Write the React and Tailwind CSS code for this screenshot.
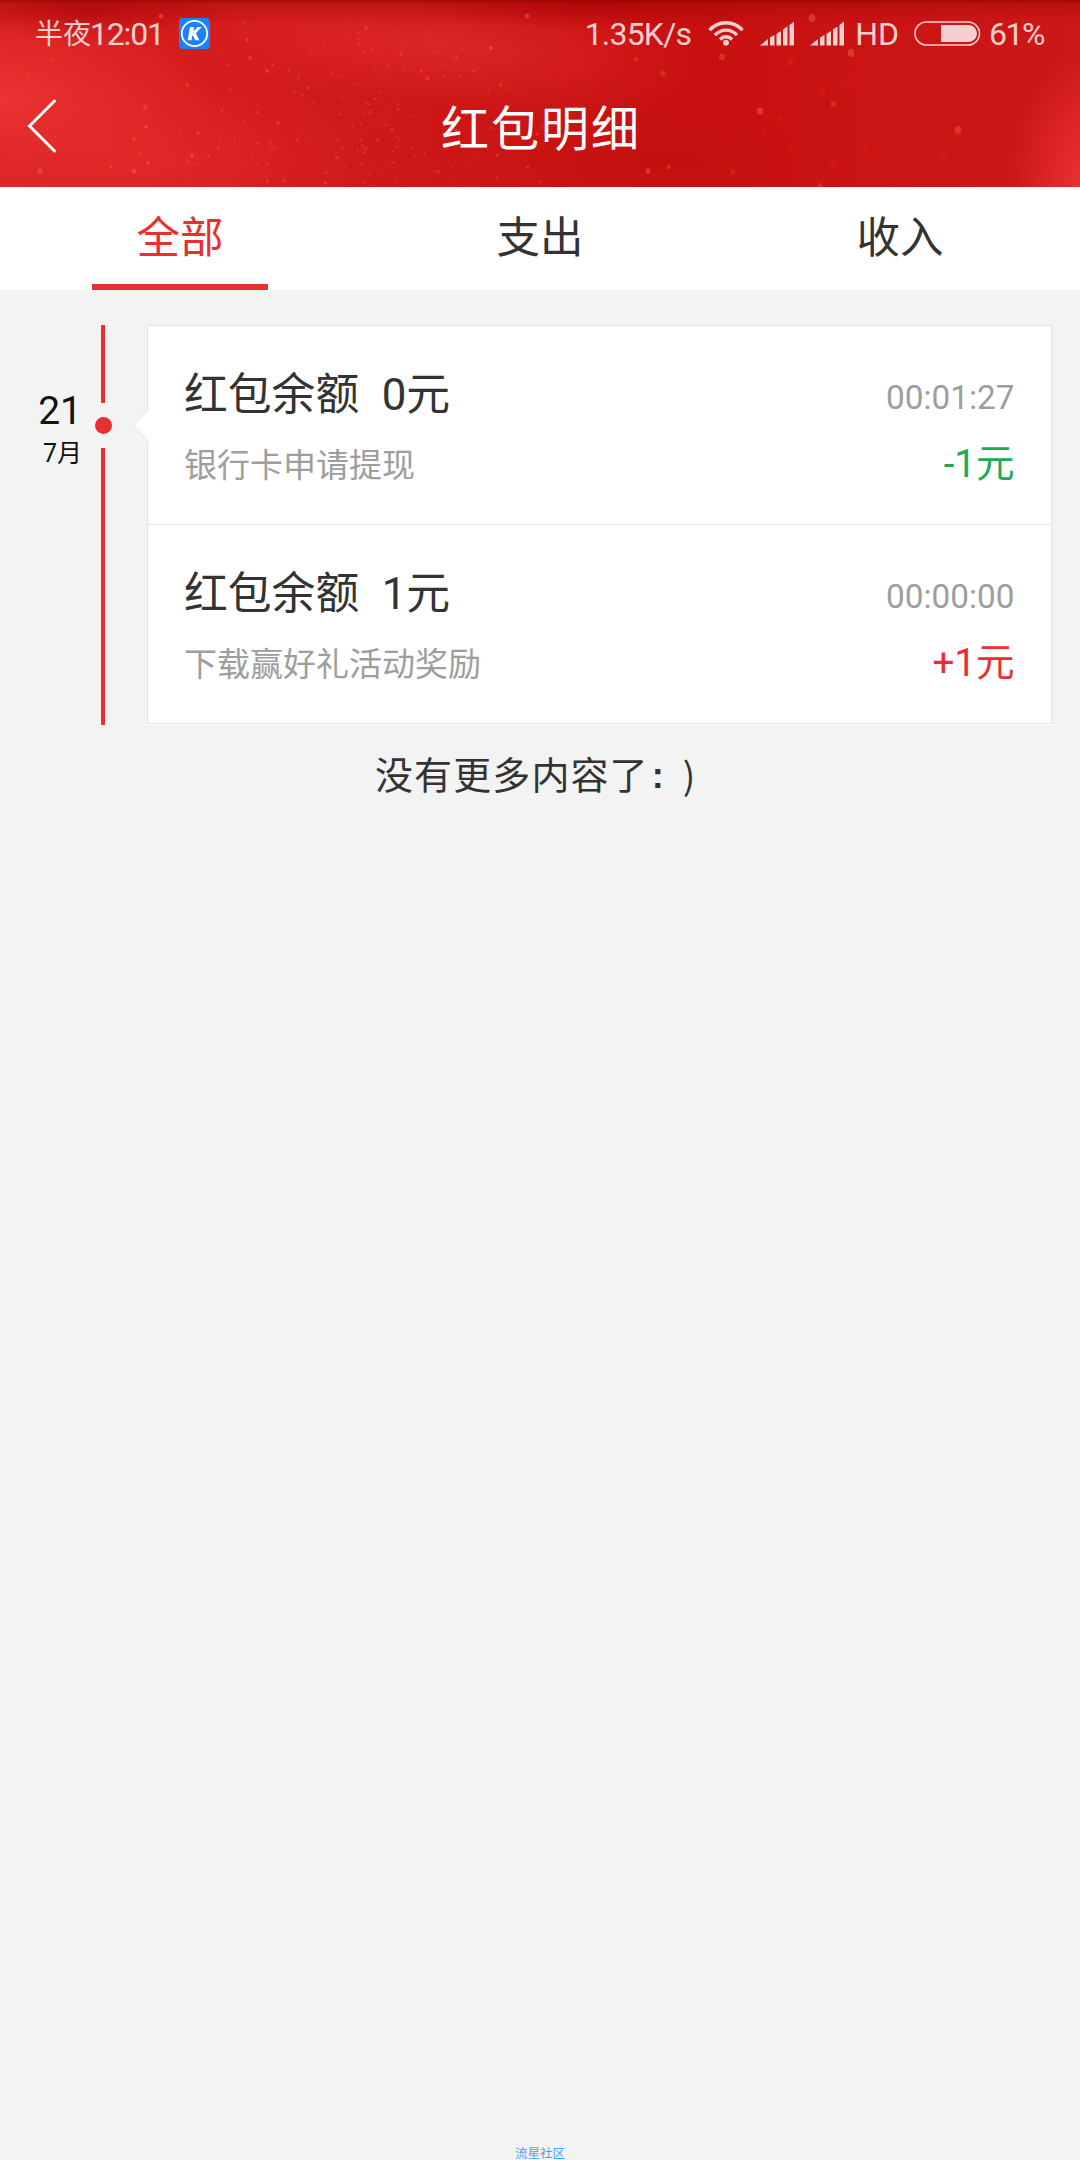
import clsx from "clsx";

const tabs = [
    { id: "all", label: "全部" },
    { id: "out", label: "支出" },
    { id: "in", label: "收入" }
];

const records = [
    { id: 1, balance: "0", time: "00:01:27", desc: "银行卡申请提现", amount: "-1元", income: false },
    { id: 2, balance: "1", time: "00:00:00", desc: "下载赢好礼活动奖励", amount: "+1元", income: true }
];

// larger, brighter sparks: x, y, radius, color
const sparks = [
    [161, 16, 2.5, "#f08080"], [527, 16, 2.5, "#f08080"], [812, 18, 4, "#e8705c"], [851, 53, 4, "#ea7a50"],
    [722, 57, 3.5, "#f0642c"], [760, 111, 3.5, "#ef7a5c"], [958, 130, 4, "#f0643c"], [833, 104, 3, "#ec4a1e"],
    [790, 62, 4, "#e42a18"], [663, 73, 3, "#ee5a24"], [636, 59, 2.5, "#ee5a24"], [40, 171, 3, "#ef6464"],
    [145, 107, 2.5, "#ef6464"], [146, 127, 2, "#e88060"], [192, 155, 2, "#f07070"], [134, 171, 2.5, "#f07070"],
    [111, 167, 2, "#f06a20"], [140, 153, 2, "#f06a20"], [134, 139, 2, "#f06a20"], [187, 85, 2, "#f46a30"],
    [52, 59, 2.5, "#f0441e"], [27, 73, 2, "#f0541e"], [648, 171, 3, "#e86464"], [669, 167, 2.5, "#e8541e"],
    [247, 40, 2, "#f06464"], [250, 58, 2, "#f06464"], [267, 71, 2, "#f06464"], [198, 133, 2, "#ee5a5a"],
    [491, 48, 2, "#f08080"], [501, 85, 2, "#f0601e"], [366, 28, 2, "#ee5a5a"], [148, 163, 2, "#f07070"],
    [401, 54, 2, "#ee5a5a"], [421, 71, 2, "#ee5a5a"], [428, 78, 2, "#ee5a5a"], [497, 155, 2, "#ee5a5a"],
    [822, 91, 4, "#dc2018"], [866, 146, 5, "#dc1c14"], [780, 118, 4, "#dc1c14"], [833, 167, 5, "#dc1c14"],
    [790, 148, 4, "#dc1c14"], [850, 81, 4, "#dc1c14"], [820, 186, 3, "#f0501e"], [943, 155, 4, "#dc2018"],
    [733, 172, 3, "#e03818"], [764, 132, 3, "#dc1c14"], [912, 96, 4, "#d81c18"]
];

// small seeded generator so the dust is the same on every render
function makeDust(count) {
    let seed = 20170721;
    const next = () => {
        seed = (seed * 16807) % 2147483647;
        return seed / 2147483647;
    };
    return Array.from({ length: count }, () => ({
        x: 170 + (next() + next()) * 190,
        y: 10 + Math.sqrt(next()) * 176,
        r: 0.8 + next() * 0.8,
        o: 0.12 + next() * 0.25
    }));
}

const dust = makeDust(200);

function HeaderBackdrop() {
    return (
        <svg className="absolute inset-0 -z-10 h-full w-full" viewBox="0 0 1080 187" preserveAspectRatio="none">
            <defs>
                <linearGradient id="base" x1="0" x2="1" y1="0" y2="0">
                    <stop offset="0" stopColor="#dc2424" />
                    <stop offset="0.2" stopColor="#d41c1c" />
                    <stop offset="0.45" stopColor="#cc1616" />
                    <stop offset="0.65" stopColor="#c81010" />
                    <stop offset="1" stopColor="#ce1818" />
                </linearGradient>
                <radialGradient id="glow">
                    <stop offset="0" stopColor="#f03838" />
                    <stop offset="0.5" stopColor="#ea3030" stopOpacity="0.6" />
                    <stop offset="1" stopColor="#e62c2c" stopOpacity="0" />
                </radialGradient>
                <radialGradient id="shade">
                    <stop offset="0" stopColor="#b80808" stopOpacity="0.75" />
                    <stop offset="1" stopColor="#c00c0c" stopOpacity="0" />
                </radialGradient>
                <linearGradient id="top" x1="0" x2="0" y1="0" y2="1">
                    <stop offset="0" stopColor="#800000" stopOpacity="0.6" />
                    <stop offset="0.15" stopColor="#900000" stopOpacity="0.3" />
                    <stop offset="1" stopColor="#a00000" stopOpacity="0" />
                </linearGradient>
            </defs>
            <rect width="1080" height="187" fill="url(#base)" />
            <ellipse cx="0" cy="100" rx="220" ry="90" fill="url(#glow)" opacity="0.8" />
            <ellipse cx="150" cy="160" rx="220" ry="90" fill="url(#glow)" opacity="0.4" />
            <ellipse cx="440" cy="45" rx="270" ry="62" fill="url(#glow)" opacity="0.45" transform="rotate(5 440 45)" />
            <ellipse cx="1095" cy="190" rx="85" ry="140" fill="url(#glow)" />
            <ellipse cx="90" cy="10" rx="150" ry="32" fill="url(#shade)" />
            <ellipse cx="600" cy="4" rx="190" ry="26" fill="url(#shade)" />
            <ellipse cx="650" cy="160" rx="190" ry="60" fill="url(#shade)" opacity="0.3" />
            <rect width="1080" height="26" fill="url(#top)" />
            {dust.map((d, i) => (
                <circle key={i} cx={d.x} cy={d.y} r={d.r} fill="#ff6a5a" opacity={d.o} />
            ))}
            {sparks.map(([x, y, r, color], i) => (
                <ellipse key={i} cx={x} cy={y} rx={r * 0.85} ry={r} fill={color} opacity="0.4" />
            ))}
        </svg>
    );
}

function AppBadge() {
    return (
        <svg className="ml-[15px] h-[31px] w-[31px]" viewBox="0 0 31 31">
            <rect width="31" height="31" rx="4" fill="#1a82ff" />
            <circle cx="15.5" cy="15.5" r="12.7" fill="none" stroke="#fff" strokeWidth="1.8" />
            <path d="M11 9h4.200l-.8 4.500L18.500 9h4.200l-5.700 6.200 3.300 7h-4.200l-2-4.900-.9 1-.7 3.900H8.700z" fill="#fff" />
        </svg>
    );
}

function WifiIcon() {
    return (
        <svg className="ml-[17px] h-[26px] w-[36px]" viewBox="0 0 36 26" fill="none" stroke="#f6cfcf" strokeWidth="3.400">
            <path d="M1.500 10.200C10.500.2 25.500.2 34.500 10.200" />
            <path d="M7 15.200c6-6.800 16-6.800 22 0" />
            <path d="M12 19.500c3.500-3.600 8.500-3.600 12 0" />
            <circle cx="18" cy="22.700" r="2.900" fill="#f6cfcf" stroke="none" />
        </svg>
    );
}

function SignalIcon() {
    return (
        <svg className="ml-[16px] h-[25px] w-[34px]" viewBox="0 0 34 25" fill="#f6cfcf">
            <path d="M0 24.500L8 18v6.500zM10 16.500l4.500-2.600v10.600H10zM16.500 13l4.500-3v14.500h-4.500zM23 8.500l4.500-3v19H23zM29.500 4L34 .5v24h-4.500z" />
        </svg>
    );
}

function BatteryIcon() {
    return (
        <svg className="ml-[15px] h-[25px] w-[67px]" viewBox="0 0 67 25">
            <rect x="1" y="1" width="64.500" height="23" rx="11.500" fill="none" stroke="#f6cfcf" strokeWidth="1.600" />
            <path d="M27 4h27.500a8.500 8.500 0 0 1 0 17H27z" fill="#f6cfcf" />
        </svg>
    );
}

function StatusBar() {
    return (
        <div className="flex h-[66px] items-center justify-between pl-[35px] pr-[36px] text-[32px] text-[#f6cfcf]">
            <div className="flex items-center">
                <span className="pt-[3px] text-[28px]">半夜</span>
                <span className="-ml-[1px] pt-[1px] tracking-[-1.2px]">12:01</span>
                <AppBadge />
            </div>
            <div className="flex items-center">
                <span className="pt-[1px] tracking-[-0.8px]">1.35K/s</span>
                <WifiIcon />
                <SignalIcon />
                <SignalIcon />
                <span className="ml-[11px] pt-[1px]">HD</span>
                <BatteryIcon />
                <span className="ml-[8px] pt-[1px] tracking-[-1.5px]">61%</span>
            </div>
        </div>
    );
}

function Header() {
    return (
        <header className="relative isolate h-[187px]">
            <HeaderBackdrop />
            <StatusBar />
            <div className="grid h-[121px] grid-cols-[1fr_auto_1fr] items-center pb-[1px]">
                <svg className="ml-[26px] h-[54px] w-[32px]" viewBox="0 0 32 54" fill="none">
                    <path d="M28.500 2L3.500 27l25 25" stroke="#fff" strokeWidth="3" strokeLinecap="round" />
                </svg>
                <h1 className="pl-[2px] pt-[8px] text-[48px] leading-none tracking-[2px] text-white">红包明细</h1>
            </div>
        </header>
    );
}

function Tabs({ active }) {
    return (
        <nav className="grid h-[103px] grid-cols-3 bg-white">
            {tabs.map(tab => (
                <button
                    key={tab.id}
                    className={clsx(
                        "mx-auto w-[176px] border-b-[6px] pt-[7px] text-[43.5px] leading-none",
                        tab.id === active ? "border-[#e83030] text-[#e83030]" : "border-transparent text-[#333333]"
                    )}
                >
                    {tab.label}
                </button>
            ))}
        </nav>
    );
}

function Timeline() {
    return (
        <div className="flex w-[147px] shrink-0">
            <div className="flex w-[82px] flex-col items-end pt-[63px] text-[#111111]">
                <span className="text-[39px] leading-[46px]">21</span>
                <span className="mt-[5px] text-[25px] leading-[30px]">7月</span>
            </div>
            <div className="ml-[13px] flex w-[17px] flex-col">
                <div className="ml-[6px] h-[78px] w-[4px] bg-[#e83030]" />
                <div className="my-[14px] h-[17px] w-[17px] rounded-full bg-[#e83030]" />
                <div className="ml-[6px] w-[4px] grow bg-[#e83030]" />
            </div>
        </div>
    );
}

function Record({ item }) {
    return (
        <li className="flex h-[199px] justify-between border-b border-[#e4e4e4] pl-[36px] pr-[36.5px]">
            <div className="pt-[43px]">
                <p className="flex gap-[22.5px] text-[43.8px] leading-[52px] text-[#333333]">
                    <span>红包余额</span>
                    <span>{item.balance}元</span>
                </p>
                <p className="mt-[25px] text-[33px] leading-[40px] text-[#9e9e9e]">{item.desc}</p>
            </div>
            <div className="pt-[52px] text-right">
                <p className="text-[33.3px] leading-[40px] text-[#9e9e9e]">{item.time}</p>
                <p
                    className={clsx(
                        "mt-[23px] text-[38.5px] leading-[46px]",
                        item.income ? "text-[#e83030]" : "text-[#20aa55]"
                    )}
                >
                    {item.amount}
                </p>
            </div>
        </li>
    );
}

function App() {
    return (
        <div className="flex h-[2160px] w-[1080px] flex-col overflow-hidden bg-[#f3f3f3] font-[Roboto,'Noto_Sans_CJK_SC',sans-serif]">
            <Header />
            <Tabs active="all" />
            <main className="flex grow flex-col pt-[35px]">
                <section className="flex pr-[28px]">
                    <Timeline />
                    <div className="relative grow border-b border-white">
                        <ul className="border-x border-t border-[#e4e4e4] bg-white">
                            {records.map(item => (
                                <Record key={item.id} item={item} />
                            ))}
                        </ul>
                        {/* pointer towards the date dot */}
                        <svg className="absolute -left-[14px] top-[84px] h-[33px] w-[17px]" viewBox="0 0 17 33">
                            <path d="M17 0L1 16.500 17 33z" fill="#fff" />
                            <path d="M16 .5L.7 16.500 16 32.500" fill="none" stroke="#e8e8e8" />
                        </svg>
                    </div>
                </section>
                <p className="mt-[27px] flex h-[48px] pl-[375px] text-[38px] leading-[48px] text-[#333333]">
                    <span className="tracking-[1.1px]">没有更多内容了</span>
                    <span className="ml-[3px] font-['Liberation_Sans'] text-[36px] font-bold">:</span>
                    <span className="ml-[19px] font-['Noto_Sans_CJK_SC'] text-[37px] leading-[45px]">)</span>
                </p>
                <footer className="mt-auto text-center text-[12.5px] leading-[13px] text-[#42a5f5]">流星社区</footer>
            </main>
        </div>
    );
}

export default App;
